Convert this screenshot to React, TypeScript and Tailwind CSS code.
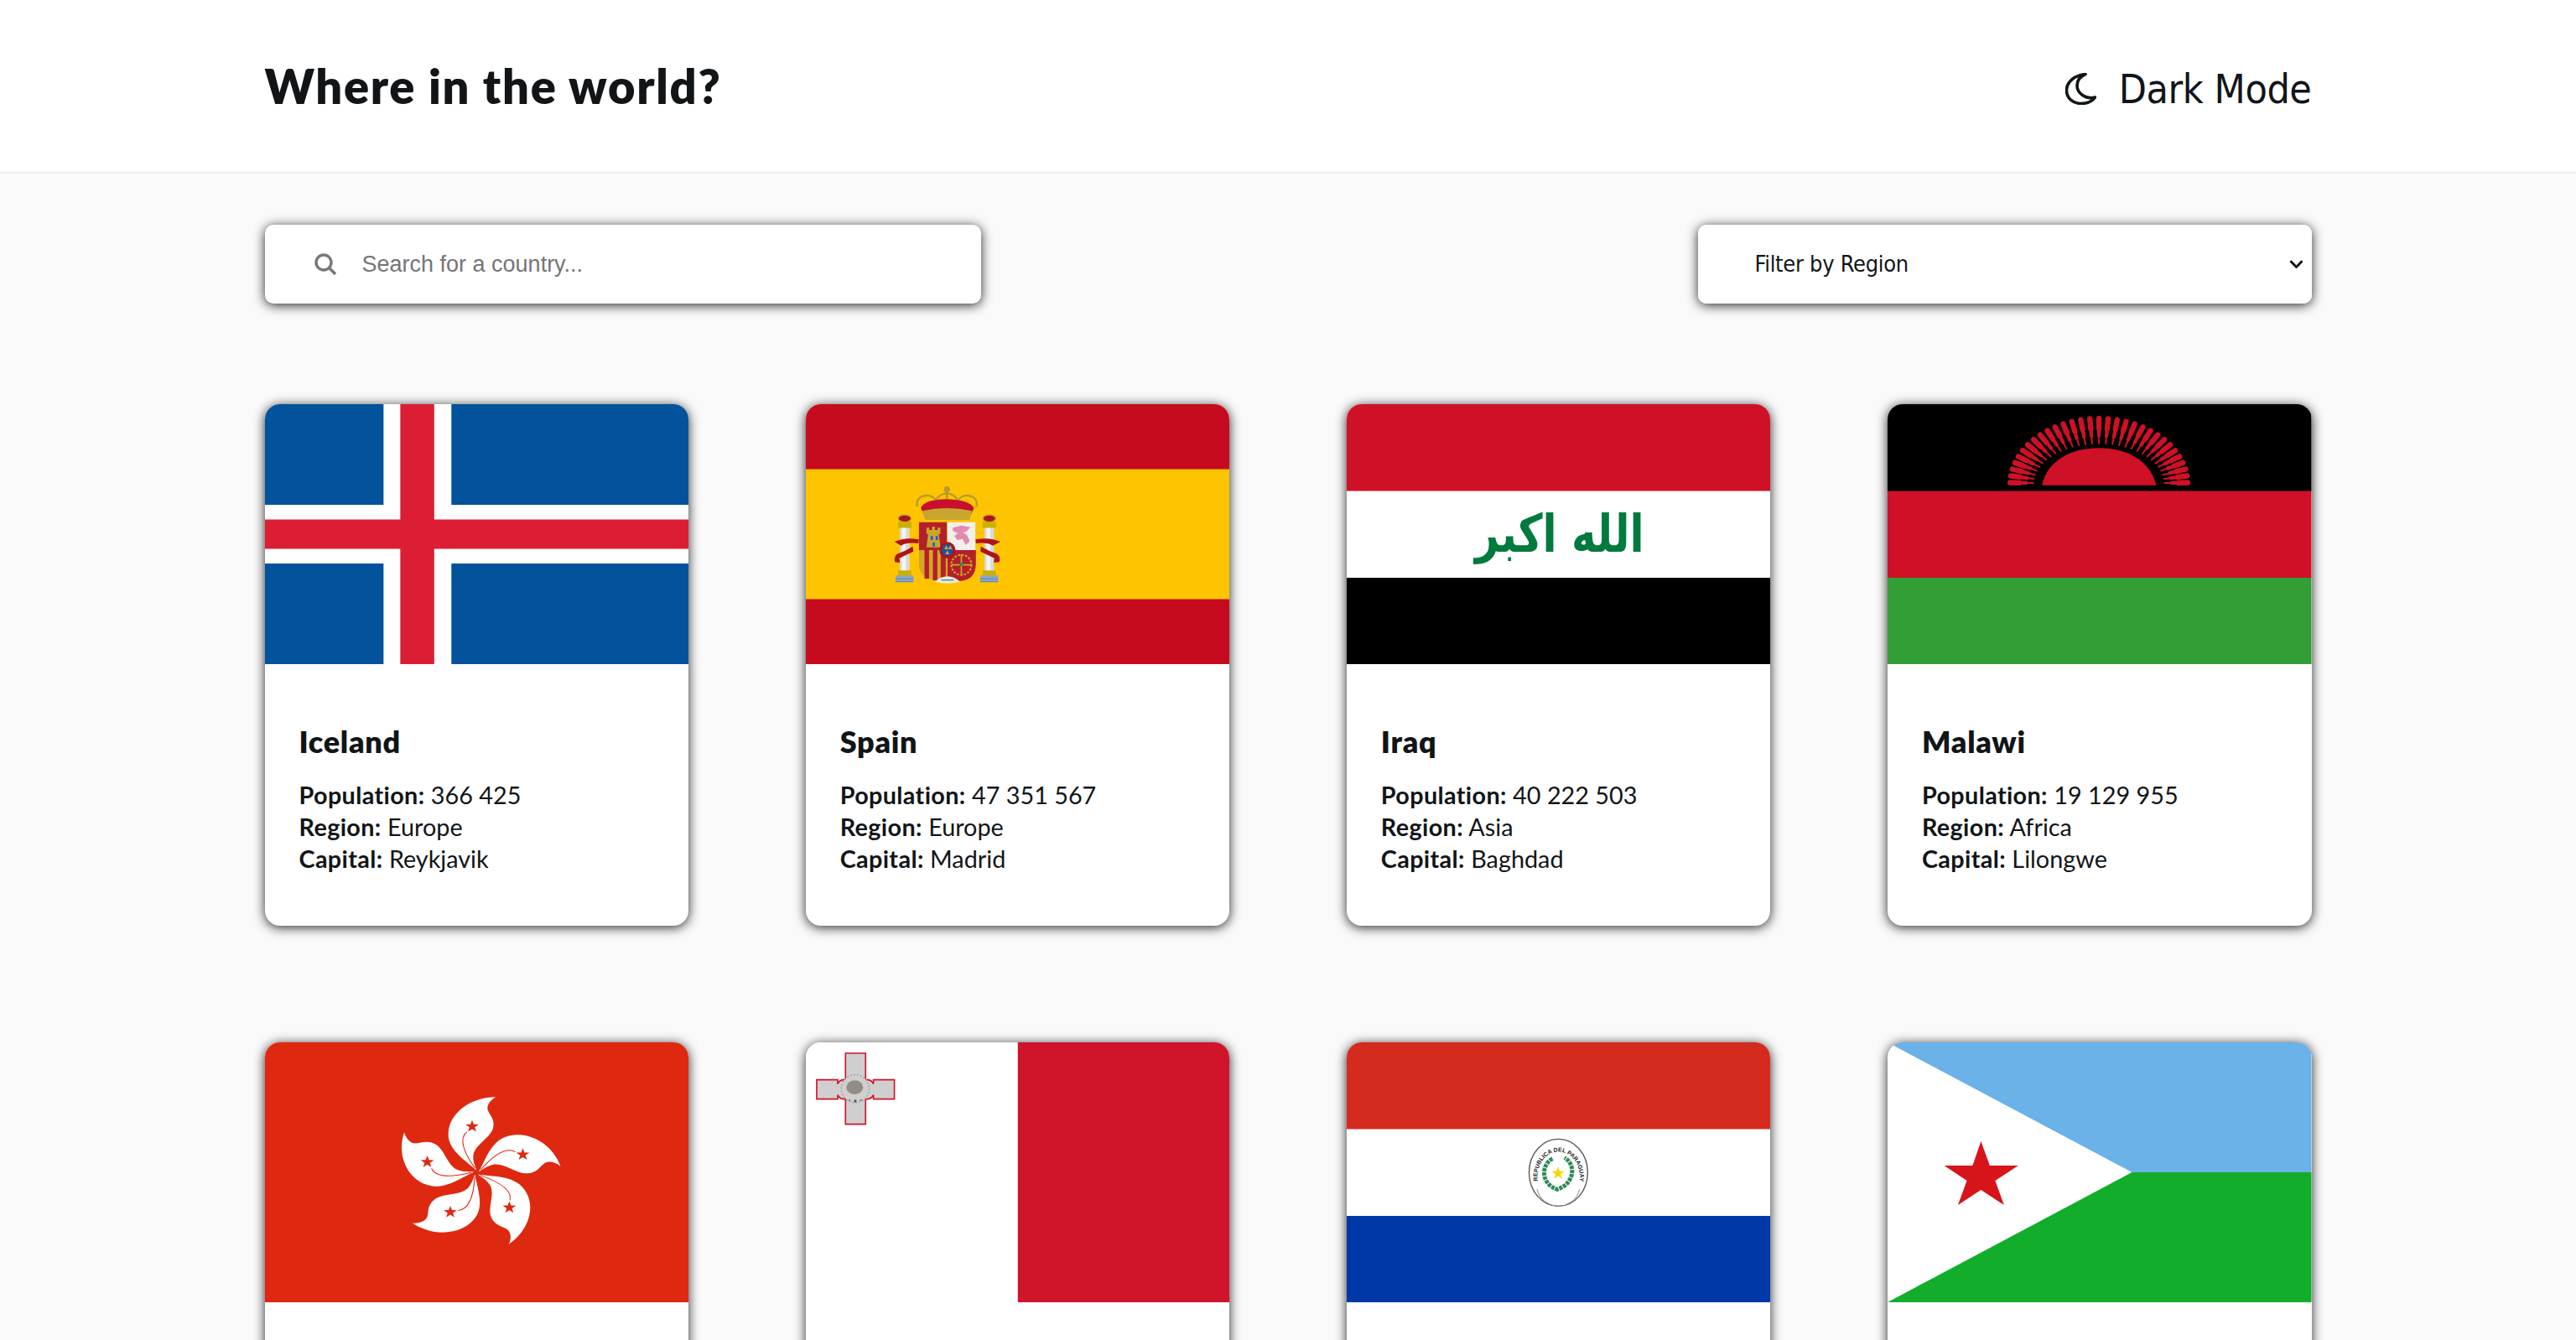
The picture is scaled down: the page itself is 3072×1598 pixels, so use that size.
import React from "react";

const W = 506;
const H = 310;

function Svg({ children }: { children: React.ReactNode }) {
  return (
    <svg viewBox={`0 0 ${W} ${H}`} preserveAspectRatio="none" className="block h-[310px] w-full">
      {children}
    </svg>
  );
}

function Iceland() {
  return (
    <Svg>
      <rect width={W} height={H} fill="#02529C" />
      <rect x="141.5" width="81" height={H} fill="#fff" />
      <rect y="120" width={W} height="70" fill="#fff" />
      <rect x="161.5" width="40.5" height={H} fill="#DC1E35" />
      <rect y="137.5" width={W} height="35" fill="#DC1E35" />
    </Svg>
  );
}

function Pillar({ x }: { x: number }) {
  return (
    <g>
      <ellipse cx={x} cy="232" rx="23" ry="13" fill="#AD1519" stroke="#C8A62E" strokeWidth="4" />
      <rect x={x - 24} y="244" width="48" height="22" fill="#C8B100" />
      <rect x={x - 17} y="266" width="34" height="165" fill="#DADADA" />
      <rect x={x - 10} y="266" width="14" height="165" fill="#F4F4F4" />
      <rect x={x - 24} y="418" width="48" height="20" fill="#C8B100" />
      <rect x={x - 32} y="436" width="64" height="24" fill="#8AA8C0" />
      <path d={`M${x - 34} 458h64M${x - 34} 448h64`} stroke="#5B88B0" strokeWidth="3" />
    </g>
  );
}

function Spain() {
  return (
    <Svg>
      <rect width={W} height={H} fill="#C60B1E" />
      <rect y="77.5" width={W} height="155" fill="#FFC400" />
      <g transform="translate(59 59) scale(.3333)">
        <Pillar x={177} />
        <Pillar x={480} />
        <path d="M140 315q40-18 88-8l-2 14q-40-6-62 8zM142 388q-6-20 10-30q28-10 54-26l2 18q-30 14-50 24l2 16zM520 315q-40-18-90-8l2 14q40-6 60 8zM516 388q6-20-10-30q-28-10-56-26l-2 18q30 14 50 24l-2 16z" fill="#AD1519" />
        <path d="M222 190q-6-35 30-40q26-2 36 18q14-25 40-26q26 1 40 26q12-20 36-18q36 5 30 40" fill="none" stroke="#B89A2C" strokeWidth="7" />
        <path d="M235 195q10-30 90-32q85 2 100 32l-10 22H245z" fill="#C8102E" />
        <path d="M240 205q85-20 178 0l-8 32H250z" fill="#C8A62E" />
        <circle cx="328" cy="128" r="11" fill="#B89A2C" />
        <rect x="324" y="128" width="8" height="34" fill="#B89A2C" />
        <path d="M228 245h100v100H228z" fill="#B3202A" />
        <path d="M330 245h100v100H330z" fill="#F2F0EA" />
        <path d="M228 345h100v112q-62 6-90-28q-10-14-10-34z" fill="#D4A626" />
        <path d="M248 345h16v102h-16zM278 345h16v108h-16zM306 345h18v112h-18z" fill="#B3202A" />
        <path d="M330 345h102v50q-2 55-52 60q-30 2-50-14z" fill="#B3202A" />
        <circle cx="380" cy="398" r="36" fill="none" stroke="#D4A626" strokeWidth="6" strokeDasharray="8 5" />
        <path d="M380 360v76M344 398h72" stroke="#D4A626" strokeWidth="5" />
        <circle cx="380" cy="396" r="7" fill="#2E8B57" />
        <path d="M255 335l6-48h-6v-22h10v8h10v-12h10v12h10v-8h10v22h-6l6 48z" fill="#C8A62E" />
        <path d="M270 295h8v14h-8zM288 295h8v14h-8zM277 318h8v14h-8z" fill="#1D5FD0" />
        <path d="M350 265l30-8 32 6-12 14-14 6 14 8 10 22-14 14-12-22-18 4-12-14 14-10-20-10z" fill="#E48AAE" />
        <circle cx="330" cy="345" r="29" fill="#AD1519" />
        <circle cx="330" cy="345" r="21" fill="#1E4FA8" />
        <path d="M322 340l4-8 4 8zM336 340l4-8 4 8zM326 358l4-8 4 8z" fill="#D4A626" strokeWidth="4" stroke="#D4A626" />
        <path d="M285 458q45-38 90 0q-45 12-90 0z" fill="#E8E8E0" />
        <path d="M308 452h44" stroke="#3A8C6A" strokeWidth="4" />
      </g>
    </Svg>
  );
}

function Iraq() {
  return (
    <Svg>
      <rect width={W} height="104" fill="#CE1126" />
      <rect y="103.5" width={W} height="104" fill="#fff" />
      <rect y="207" width={W} height="103" fill="#000" />
      <text
        transform="translate(254 176) scale(1 1.25)"
        textAnchor="middle"
        fontFamily="'DejaVu Sans', sans-serif"
        fontWeight="700"
        fontSize="50"
        fill="#007A3D"
        direction="rtl"
      >
        الله اكبر
      </text>
    </Svg>
  );
}

function Malawi() {
  const rays = Array.from({ length: 31 }, (_, i) => {
    const a = (Math.PI * (i + 0.18)) / 30.36;
    const c = Math.cos(a);
    const s = Math.sin(a);
    const x0 = 430 + 235 * c;
    const y0 = 288 - 145 * s;
    const x1 = 430 + 318 * c;
    const y1 = 288 - 234 * s;
    const at = (t: number) => `${x0 + (x1 - x0) * t} ${y0 + (y1 - y0) * t}`;
    return (
      <g key={i} stroke="#CE1126" strokeLinecap="round">
        <path d={`M${at(0)}L${x1} ${y1}`} strokeWidth="6" />
        <path d={`M${at(0.3)}L${x1} ${y1}`} strokeWidth="13" />
        <path d={`M${at(0.6)}L${x1} ${y1}`} strokeWidth="19" />
      </g>
    );
  });
  return (
    <Svg>
      <rect width={W} height="104" fill="#000" />
      <rect y="103.5" width={W} height="104" fill="#CE1126" />
      <rect y="207" width={W} height="103" fill="#339E35" />
      <g transform="translate(109 -1) scale(.3333)">
        {rays}
        <path d="M226 293C245 205 330 160 430 160C530 160 615 205 635 293z" fill="#CE1126" />
      </g>
    </Svg>
  );
}

function Star5({ cx, cy, r, fill }: { cx: number; cy: number; r: number; fill: string }) {
  const pts = Array.from({ length: 10 }, (_, i) => {
    const a = (-90 + i * 36) * (Math.PI / 180);
    const q = i % 2 === 0 ? r : r * 0.4;
    return `${cx + q * Math.cos(a)},${cy + q * Math.sin(a)}`;
  }).join(" ");
  return <polygon points={pts} fill={fill} />;
}

function HongKong() {
  return (
    <Svg>
      <rect width={W} height={H} fill="#DE2910" />
      <g transform="translate(124 37) scale(.3333) translate(385 355) scale(1.09 1)">
        {[0, 72, 144, 216, 288].map((r) => (
          <g key={r} transform={`rotate(${r})`}>
            <path
              d="M0-8C-30-40-95-80-92-140C-90-215-15-270 64-270C45-258 32-240 38-222C44-205 62-190 55-160C48-125-5-100-10-62C-12-40-4-25 0-8Z"
              fill="#fff"
            />
            <path d="M-5-16C-40-70-60-120-31-145" fill="none" stroke="#DE2910" strokeWidth="3" />
            <Star5 cx={-14} cy={-165} r={23} fill="#DE2910" />
          </g>
        ))}
      </g>
    </Svg>
  );
}

function Malta() {
  return (
    <Svg>
      <rect width="253" height={H} fill="#fff" />
      <rect x="253" width="253" height={H} fill="#CF142B" />
      <g transform="translate(-1 -3) scale(.3333)">
        <path
          d="M145 48h72v95h8q15 2 20 15v-15h75v69h-75v-15q-5 13-20 15h-8v90h-72v-90h-8q-15-2-20-15v15H42v-69h75v15q5-13 20-15h8z"
          fill="#CFCFCF"
          stroke="#CF142B"
          strokeWidth="5"
        />
        <circle cx="180" cy="175" r="50" fill="#CFCFCF" stroke="#A5A19D" strokeWidth="5" strokeDasharray="5 7" />
        <ellipse cx="178" cy="170" rx="30" ry="25" fill="#958B86" />
        <circle cx="180" cy="219" r="5" fill="#555" />
        <circle cx="160" cy="216" r="3" fill="#666" />
        <circle cx="200" cy="216" r="3" fill="#666" />
      </g>
    </Svg>
  );
}

function Paraguay() {
  return (
    <Svg>
      <rect width={W} height="104" fill="#D52B1E" />
      <rect y="103.5" width={W} height="104" fill="#fff" />
      <rect y="207" width={W} height="103" fill="#0038A8" />
      <g transform="translate(194 97) scale(.3333)">
        <ellipse cx="176" cy="175" rx="105" ry="120" fill="#fff" stroke="#555" strokeWidth="4" />
        <path id="pyarc" d="M102 205A76 90 0 1 1 252 205" fill="none" />
        <text fontFamily="'Liberation Sans', sans-serif" fontWeight="700" fontSize="21" fill="#222">
          <textPath href="#pyarc">REPUBLICA DEL PARAGUAY</textPath>
        </text>
        <path d="M100 235A78 78 0 0 0 252 235" fill="none" stroke="#888" strokeWidth="3" />
        <path d="M155 125C115 145 110 215 172 235C235 215 240 145 198 122" fill="none" stroke="#2E8B57" strokeWidth="15" strokeDasharray="12 3" />
        <Star5 cx={175} cy={178} r={24} fill="#F5D800" />
      </g>
    </Svg>
  );
}

function Djibouti() {
  return (
    <Svg>
      <rect width={W} height="155" fill="#6AB2E7" />
      <rect y="155" width={W} height="155" fill="#12AD2B" />
      <polygon points="0,0 291.5,155 0,310" fill="#fff" />
      <polygon
        points="111.5,118 122,147 156,147 128.5,165 139,194 111.5,176 84,194 94.7,165 67.6,147 101.5,147"
        fill="#D7141A"
      />
    </Svg>
  );
}

const countries = [
  { name: "Iceland", pop: "366 425", region: "Europe", capital: "Reykjavik", Flag: Iceland },
  { name: "Spain", pop: "47 351 567", region: "Europe", capital: "Madrid", Flag: Spain },
  { name: "Iraq", pop: "40 222 503", region: "Asia", capital: "Baghdad", Flag: Iraq },
  { name: "Malawi", pop: "19 129 955", region: "Africa", capital: "Lilongwe", Flag: Malawi },
  { name: "Hong Kong", pop: "7 500 700", region: "Asia", capital: "City of Victoria", Flag: HongKong },
  { name: "Malta", pop: "525 285", region: "Europe", capital: "Valletta", Flag: Malta },
  { name: "Paraguay", pop: "7 132 530", region: "Americas", capital: "Asunción", Flag: Paraguay },
  { name: "Djibouti", pop: "988 002", region: "Africa", capital: "Djibouti", Flag: Djibouti },
];

function Card({ c }: { c: (typeof countries)[number] }) {
  const F = c.Flag;
  return (
    <article className="h-[622px] overflow-hidden rounded-[18px] bg-white [box-shadow:0_2px_14px_rgba(0,0,0,0.85)]">
      <F />
      <div className="px-[41px] pt-[70px]">
        <h2 className="mb-[23px] text-[36px] leading-[44px] font-extrabold tracking-[0.7px]">{c.name}</h2>
        <p className="text-[28.8px] leading-[38px] font-normal">
          <strong className="font-bold tracking-[0.35px]">Population:</strong> {c.pop}
        </p>
        <p className="text-[28.8px] leading-[38px] font-normal">
          <strong className="font-bold tracking-[0.35px]">Region:</strong> {c.region}
        </p>
        <p className="text-[28.8px] leading-[38px] font-normal">
          <strong className="font-bold tracking-[0.35px]">Capital:</strong> {c.capital}
        </p>
      </div>
    </article>
  );
}

export default function App() {
  return (
    <div className="h-screen overflow-hidden bg-[#fafafa] font-['Lato',sans-serif] text-[#111517]">
      <header className="h-[207px] border-b-2 border-[#eeeeee] bg-white">
        <div className="mx-auto flex h-full w-[2441px] items-center justify-between">
          <h1 className="text-[56px] font-extrabold tracking-[1.7px]">Where in the world?</h1>
          <button className="flex items-center gap-[27px] pt-[7px] font-['DejaVu_Sans',sans-serif] text-[48px] tracking-[-0.45px] [font-stretch:condensed]">
            <svg viewBox="0 0 37 38" className="h-[38px] w-[37px]" fill="none" stroke="currentColor" strokeWidth="3.6" strokeLinejoin="round">
              <path d="M24 1.5C10 3 1.5 11 1.5 21C1.5 30 9 36.5 19 36.5C26 36.5 32 34 35.5 29C24 32 14 24 14 15C14 9 18 4 24 1.5Z" />
            </svg>
            Dark Mode
          </button>
        </div>
      </header>
      <main className="mx-auto w-[2441px] pt-[61px]">
        <div className="flex items-start justify-between">
          <label className="flex h-[94px] w-[854px] items-center rounded-[10px] bg-white pl-[59px] [box-shadow:0_2px_14px_rgba(0,0,0,0.85)]">
            <svg viewBox="0 0 26 26" className="h-[26px] w-[26px]" fill="none" stroke="#787878" strokeWidth="3.4">
              <circle cx="11" cy="11" r="9" />
              <path d="M17.5 17.5L25 25" />
            </svg>
            <input
              placeholder="Search for a country..."
              className="ml-[31px] flex-1 bg-transparent font-['Liberation_Sans',sans-serif] text-[27px] outline-none placeholder:text-[#757575]"
            />
          </label>
          <div className="relative h-[94px] w-[732px] rounded-[10px] [box-shadow:0_2px_14px_rgba(0,0,0,0.85)]">
            <select className="h-full w-full appearance-none rounded-[10px] border-0 bg-white pl-[68px] font-['DejaVu_Sans',sans-serif] text-[27px] tracking-[-0.3px] [font-stretch:condensed] outline-none">
              <option>Filter by Region</option>
            </select>
            <svg viewBox="0 0 17 10" className="pointer-events-none absolute top-[42px] right-[10px] h-[10px] w-[17px]" fill="none" stroke="#111" strokeWidth="2.8">
              <path d="M1.5 1.2L8.5 8.5L15.5 1.2" />
            </svg>
          </div>
        </div>
        <section className="mt-[119.6px] grid grid-cols-4 gap-[139.6px]">
          {countries.map((c) => (
            <Card key={c.name} c={c} />
          ))}
        </section>
      </main>
    </div>
  );
}
